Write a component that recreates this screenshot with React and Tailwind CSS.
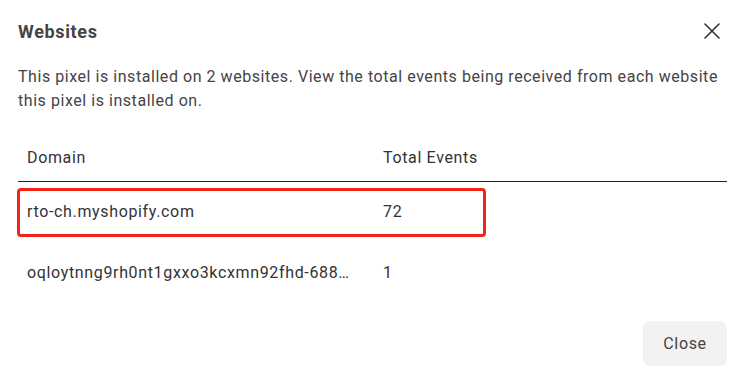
import React from 'react';

const rows = [
  { domain: 'rto-ch.myshopify.com', events: 72, highlight: true },
  { domain: 'oqloytnng9rh0nt1gxxo3kcxmn92fhd-688…', events: 1 },
];

function CloseIcon() {
  return (
    <svg width="16" height="16" viewBox="0 0 16 16" fill="none">
      <path d="M1 1L15 15M15 1L1 15" stroke="#333" strokeWidth="1.6" strokeLinecap="round" />
    </svg>
  );
}

export default function App() {
  return (
    <div className="w-[741px] h-[374px] bg-white font-['Roboto',sans-serif] text-[#333] tracking-[0.65px] overflow-hidden">
      {/* Header */}
      <div className="flex items-center justify-between h-[62px] pl-[18px] pr-[21px]">
        <h1 className="text-[18px] font-bold text-[#444]">Websites</h1>
        <button className="flex items-center justify-center w-[16px] h-[16px]">
          <CloseIcon />
        </button>
      </div>

      <p className="mt-[3px] pl-[18px] pr-[6px] text-[16px] leading-[24px] text-[#444] tracking-[0.55px]">
        This pixel is installed on 2 websites. View the total events being received from each website
        this pixel is installed on.
      </p>

      {/* Table */}
      <div className="mt-[21px] ml-[18px] mr-[14px] text-[16px]">
        <div className="flex items-center h-[48px] border-b border-[#222]">
          <div className="w-[356px] pl-[9px]">Domain</div>
          <div className="pl-[9px]">Total Events</div>
        </div>
        {rows.map((row, i) => (
          <div key={i} className={`relative flex items-center ${i === 0 ? 'h-[60px]' : 'h-[62px]'}`}>
            <div className="w-[356px] pl-[9px] whitespace-nowrap">{row.domain}</div>
            <div className="pl-[9px]">{row.events}</div>
            {row.highlight && (
              <div className="absolute left-[-1px] top-[6px] w-[469px] h-[49px] border-[3px] border-[#f5221b] rounded-[4px]" />
            )}
          </div>
        ))}
      </div>

      <div className="flex justify-end pr-[14px] mt-[17px]">
        <button className="w-[84px] h-[45px] rounded-[7px] bg-[#f2f2f2] text-[16px] text-[#444]">
          Close
        </button>
      </div>
    </div>
  );
}
